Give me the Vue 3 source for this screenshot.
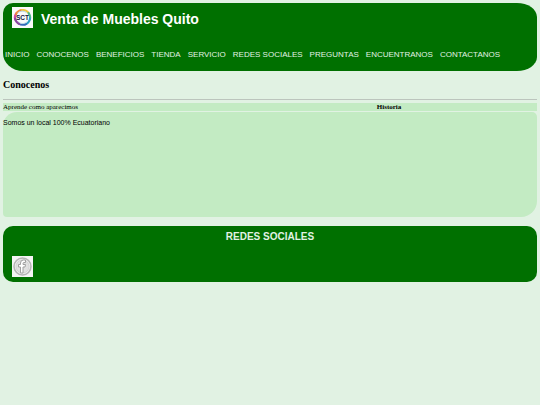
<template>
  <div class="page">
    <header class="header">
      <div class="brand">
        <svg class="logo" viewBox="0 0 42 42" role="img" aria-label="SCT">
          <rect width="42" height="42" fill="#fafafa" />
          <g fill="none" stroke-width="4" stroke-linecap="round">
            <path d="M6 25 A15 15 0 0 1 9 12" stroke="#d84a9b" />
            <path d="M8 14 A15 15 0 0 1 22 6" stroke="#f08a3c" />
            <path d="M20 6 A15 15 0 0 1 34 13" stroke="#edc83c" />
            <path d="M33 12 A15 15 0 0 1 36 25" stroke="#4fb98a" />
            <path d="M36 23 A15 15 0 0 1 26 35" stroke="#2a9fc4" />
            <path d="M28 34 A15 15 0 0 1 13 33" stroke="#3268b8" />
            <path d="M15 34 A15 15 0 0 1 6 23" stroke="#8b459f" />
          </g>
          <path d="M11 12 Q20 5 29 11 M13 30 Q22 37 31 29" fill="none" stroke="#b9d5e4" stroke-width="2" />
          <text x="21" y="26" class="logo-text" text-anchor="middle">SCT</text>
        </svg>
        <h1 class="title">Venta de Muebles Quito</h1>
      </div>
      <nav class="menu">
        <a v-for="item in menu" :key="item" href="#">{{ item }}</a>
      </nav>
    </header>

    <main>
      <h2 class="heading">Conocenos</h2>
      <hr class="line" />
      <table class="info">
        <tbody>
          <tr>
            <td>Aprende como aparecimos</td>
            <th scope="col">Historia</th>
          </tr>
        </tbody>
      </table>
      <section class="content">
        <p>Somos un local 100% Ecuatoriano</p>
      </section>
    </main>

    <footer class="footer">
      <h3>REDES SOCIALES</h3>
      <a href="#" class="social" aria-label="Facebook">
        <svg viewBox="0 0 42 42">
          <rect width="42" height="42" fill="#f4f4f4" />
          <circle cx="21" cy="21" r="17" fill="#ececec" stroke="#b4b4b4" stroke-width="3" />
          <circle cx="21" cy="21" r="13" fill="#e0e0e0" stroke="#d4d4d4" stroke-width="2" />
          <path
            d="M17 34 V22 H13 V17 H17 V14 Q17 8 23 8 H27 V13 H24 Q22 13 22 15 V17 H27 L26 22 H22 V34 Z"
            fill="#fff"
            stroke="#a0a0a0"
            stroke-width="2"
          />
        </svg>
      </a>
    </footer>
  </div>
</template>

<script setup>
// Opciones del menu principal
const menu = [
  'INICIO',
  'CONOCENOS',
  'BENEFICIOS',
  'TIENDA',
  'SERVICIO',
  'REDES SOCIALES',
  'PREGUNTAS',
  'ENCUENTRANOS',
  'CONTACTANOS'
];
</script>

<style>
body {
  background: #e1f2e3;
}
</style>

<style scoped>
.page {
  padding: 3px;
  font-family: "Liberation Serif", "Times New Roman", serif;
  font-size: 7px;
  line-height: 8px;
  color: #000;
}

.header {
  background: #007000;
  color: #e1f2e3;
  border-radius: 10px 20px 20px 20px / 10px 14px 14px 18px;
  font-family: "Liberation Sans", Arial, sans-serif;
  padding: 4px 2px 11px;
}

.brand {
  display: flex;
  align-items: center;
  gap: 8px;
  padding-left: 7px;
}

.logo {
  width: 21px;
  height: 21px;
}

.logo-text {
  font: bold 13px "Liberation Sans", Arial, sans-serif;
  fill: #161640;
}

.title {
  margin: 4px 0 0;
  font-size: 14px;
  line-height: 17px;
  color: #fff;
}

.menu {
  display: flex;
  flex-wrap: wrap;
  gap: 7px;
  margin-top: 22px;
  font-size: 8px;
  line-height: 10px;
}

.menu a {
  color: inherit;
  text-decoration: none;
  white-space: nowrap;
}

.heading {
  margin: 8px 0;
  font-size: 10px;
  line-height: 12px;
}

.line {
  margin: 0 0 3px;
  border: 0;
  border-top: 1px solid #bcc5bd;
}

.info {
  width: 100%;
  table-layout: fixed;
  border-spacing: 0;
}

.info td,
.info th {
  padding: 0;
  background: #c3ebc3;
  text-align: left;
}

.info td {
  width: 70%;
}

.content {
  min-height: 98px;
  margin-top: 1px;
  padding-top: 7px;
  background: #c3ebc3;
  border-radius: 14px 5px 16px 4px;
  font-family: "Liberation Sans", Arial, sans-serif;
}

.content p {
  margin: 0;
}

.footer {
  margin-top: 9px;
  padding: 5px 9px;
  background: #007000;
  border-radius: 10px;
  font-family: "Liberation Sans", Arial, sans-serif;
}

.footer h3 {
  margin: 0 0 13px;
  font-size: 10px;
  line-height: 12px;
  text-align: center;
  color: #e1f2e3;
}

.social {
  display: block;
  width: 21px;
  height: 21px;
}

.social svg {
  display: block;
}
</style>
